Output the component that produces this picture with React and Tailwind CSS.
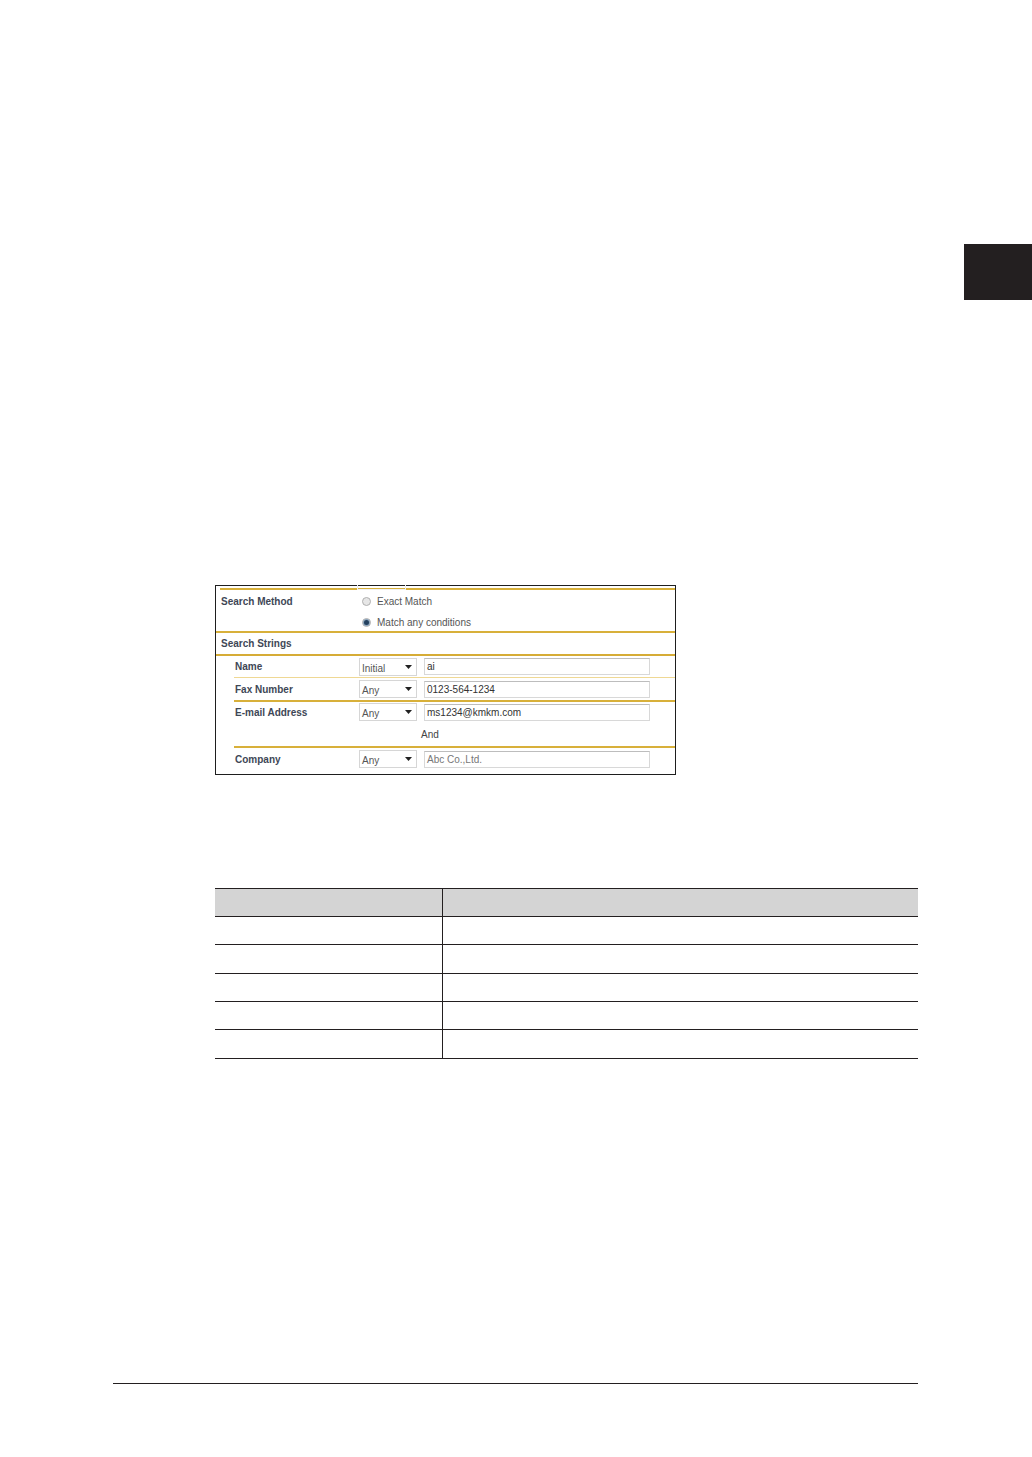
import React from "react";

const Radio = ({ checked }) => (
  <span className="flex h-[9px] w-[9px] items-center justify-center rounded-full border border-[#b0b0b0] bg-[#e6e6e6]">
    {checked && <span className="h-[5px] w-[5px] rounded-full bg-[#23405e] ring-1 ring-[#8aa3bb]" />}
  </span>
);

const Select = ({ value }) => (
  <div className="flex h-[18px] w-[58px] items-center justify-between border border-[#d6d6d6] bg-white pl-[2px] pr-[4px] text-[10px] text-[#555]">
    <span className="pt-[3px]">{value}</span>
    <svg width="7" height="4" viewBox="0 0 7 4">
      <path d="M0 0H7L3.5 4Z" fill="#222" />
    </svg>
  </div>
);

const Field = ({ value, light }) => (
  <div
    className={`flex h-[17px] w-[226px] items-center border border-[#d8d8d8] border-t-[#bdbdbd] bg-white px-[2px] text-[10px] ${
      light ? "text-[#777]" : "text-[#333]"
    }`}
  >
    {value}
  </div>
);

const FieldRow = ({ label, select, value, light, h }) => (
  <div className={`flex items-center ${h}`}>
    <div className="w-[125px] pl-[1px] text-[10px] font-bold text-[#3e4756]">{label}</div>
    <Select value={select} />
    <div className="ml-[7px]">
      <Field value={value} light={light} />
    </div>
  </div>
);

const SearchPanel = () => (
  <div className="relative ml-[215px] h-[190px] w-[461px] border border-[#1e1e1e] bg-white">
    <div className="absolute left-[141px] top-[-1px] h-[5px] w-[49px] border-x border-b border-[#f0f0f0]" />
    <div className="ml-[4px] mt-[2px] h-[2px] bg-[#d8b03a]" />
    <div className="flex h-[41px] flex-col">
      <div className="flex h-[23px] items-center">
        <div className="w-[146px] pl-[5px] text-[10px] font-bold text-[#3e4756]">Search Method</div>
        <div className="flex items-center gap-[6px] text-[10px] text-[#555]">
          <Radio />
          <span>Exact Match</span>
        </div>
      </div>
      <div className="flex h-[18px] items-center pl-[146px] text-[10px] text-[#555]">
        <div className="flex items-center gap-[6px]">
          <Radio checked />
          <span>Match any conditions</span>
        </div>
      </div>
    </div>
    <div className="h-[2px] bg-[#d8b03a]" />
    <div className="flex h-[21px] items-center pl-[5px] text-[10px] font-bold text-[#3e4756]">Search Strings</div>
    <div className="h-[2px] bg-[#d6ac36]" />
    <div className="ml-[18px]">
      <FieldRow label="Name" select="Initial" value="ai" h="h-[21px]" />
      <div className="h-[1px] bg-[#efd894]" />
      <FieldRow label="Fax Number" select="Any" value="0123-564-1234" h="h-[22px]" />
      <div className="h-[2px] bg-[#d8b03a]" />
      <div className="flex h-[44px] flex-col">
        <FieldRow label="E-mail Address" select="Any" value="ms1234@kmkm.com" h="h-[20px]" />
        <div className="flex h-[24px] items-center pl-[187px] text-[10px] text-[#444]">And</div>
      </div>
      <div className="h-[2px] bg-[#d8b03a]" />
      <FieldRow label="Company" select="Any" value="Abc Co.,Ltd." light h="h-[22px]" />
    </div>
  </div>
);

const rows = ["h-[28px]", "h-[29px]", "h-[28px]", "h-[28px]", "h-[29px]"];

const Table = () => (
  <div className="ml-[215px] mt-[113px] w-[703px] border-t border-[#231f20]">
    <div className="grid h-[28px] grid-cols-[228px_1fr] border-b border-[#231f20] bg-[#d4d4d4]">
      <div className="border-r border-[#231f20]" />
      <div />
    </div>
    {rows.map((h, i) => (
      <div key={i} className={`grid ${h} grid-cols-[228px_1fr] border-b border-[#231f20]`}>
        <div className="border-r border-[#231f20]" />
        <div />
      </div>
    ))}
  </div>
);

export default function App() {
  return (
    <div className="h-[1457px] w-[1032px] overflow-hidden bg-white font-['Liberation_Sans',Arial,sans-serif]">
      <div className="flex justify-end pt-[244px]">
        <div className="h-[56px] w-[68px] bg-[#231f20]" />
      </div>
      <div className="mt-[285px]">
        <SearchPanel />
      </div>
      <Table />
      <div className="ml-[113px] mt-[324px] h-[1px] w-[805px] bg-[#231f20]" />
    </div>
  );
}
